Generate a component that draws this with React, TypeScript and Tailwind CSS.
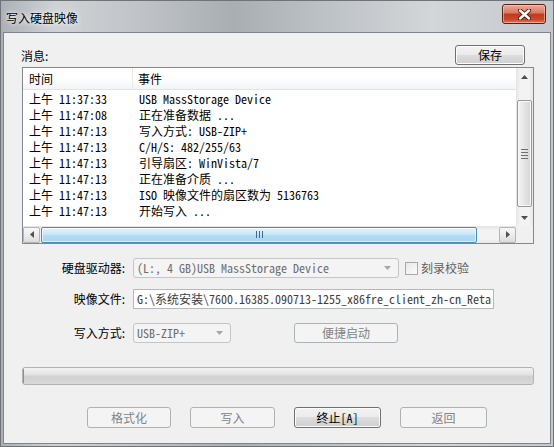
import React from "react";

const CJK_RUN = /([\u3000-\u303f\u4e00-\u9fff\uff00-\uffef]+)/;
const CJK_TEST = /[\u3000-\u303f\u4e00-\u9fff\uff00-\uffef]/;

// Renders mixed Chinese / Latin text in a half-width monospace CJK face.
function Mixed({ text }: { text: string }) {
  const parts = text.split(CJK_RUN).filter(Boolean);
  return (
    <>
      {parts.map((p, i) =>
        CJK_TEST.test(p) ? (
          <span key={i} className="font-['Noto_Sans_CJK_SC',sans-serif] text-[12px]">
            {p}
          </span>
        ) : (
          <span
            key={i}
            className="font-['Noto_Sans_Mono_CJK_SC','Liberation_Mono',monospace] text-[12px] whitespace-pre"
          >
            {p}
          </span>
        )
      )}
    </>
  );
}

const LOG: [string, string][] = [
  ["11:37:33", "USB MassStorage Device"],
  ["11:47:08", "正在准备数据 ..."],
  ["11:47:13", "写入方式: USB-ZIP+"],
  ["11:47:13", "C/H/S: 482/255/63"],
  ["11:47:13", "引导扇区: WinVista/7"],
  ["11:47:13", "正在准备介质 ..."],
  ["11:47:13", "ISO 映像文件的扇区数为 5136763"],
  ["11:47:13", "开始写入 ..."],
];

function Tri({ dir, color = "#505050" }: { dir: "up" | "down" | "left" | "right"; color?: string }) {
  if (dir === "up")
    return (
      <svg width="7" height="4" viewBox="0 0 7 4">
        <path d="M0 4 L3.5 0 L7 4Z" fill={color} />
      </svg>
    );
  if (dir === "down")
    return (
      <svg width="7" height="4" viewBox="0 0 7 4">
        <path d="M0 0 L3.5 4 L7 0Z" fill={color} />
      </svg>
    );
  if (dir === "left")
    return (
      <svg width="4" height="7" viewBox="0 0 4 7">
        <path d="M4 0 L0 3.5 L4 7Z" fill={color} />
      </svg>
    );
  return (
    <svg width="4" height="7" viewBox="0 0 4 7">
      <path d="M0 0 L4 3.5 L0 7Z" fill={color} />
    </svg>
  );
}

function Btn({ label, enabled = false, className = "" }: { label: React.ReactNode; enabled?: boolean; className?: string }) {
  return (
    <div
      className={
        "h-full flex items-center justify-center rounded-[3px] border leading-[16px] " +
        (enabled
          ? "border-[#707070] text-black bg-[linear-gradient(180deg,#f2f2f2_0%,#ebebeb_50%,#dddddd_50%,#cfcfcf_100%)] shadow-[inset_0_0_0_1px_#fcfcfc] "
          : "border-[#adb2b5] text-[#838383] bg-[#f4f4f4] ") +
        className
      }
    >
      {label}
    </div>
  );
}

function Combo({ text, className = "" }: { text: string; className?: string }) {
  return (
    <div
      className={
        "h-full flex items-center rounded-[3px] border border-[#c5c5c5] bg-[#f4f4f4] pl-[3px] pr-[7px] text-[#6d6d6d] " +
        className
      }
    >
      <div className="flex-1 min-w-0 overflow-hidden whitespace-nowrap leading-[16px]">
        <Mixed text={text} />
      </div>
      <Tri dir="down" color="#a6a6a6" />
    </div>
  );
}

export default function App() {
  return (
    <div className="w-[554px] h-[447px] flex flex-col overflow-hidden bg-[linear-gradient(90deg,#aab0b5_0%,#cfd3d6_10%,#c0c4c8_25%,#a9aeb3_42%,#bcc1c5_58%,#d3d6d9_78%,#c4c8cc_100%)] shadow-[inset_0_0_0_1px_#6f7479] font-['Noto_Sans_CJK_SC',sans-serif] text-[12px] text-black">
      {/* caption bar */}
      <div className="h-[32px] shrink-0 flex">
        <div className="pl-[6px] pt-[8px] leading-[20px] text-[12px] text-black [text-shadow:0_0_6px_rgba(255,255,255,0.95),0_0_3px_rgba(255,255,255,0.9)]">
          写入硬盘映像
        </div>
        <div className="ml-auto mt-[4px] mr-[8px] w-[44px] h-[20px] rounded-[3px] border border-[#5a1e13] bg-[linear-gradient(180deg,#e9ab9b_0%,#d9775f_45%,#c2391c_50%,#c9472b_80%,#de7a5a_100%)] shadow-[inset_0_0_0_1px_rgba(255,210,200,0.55)] flex items-center justify-center">
          <svg width="13" height="11" viewBox="0 0 13 11">
            <path d="M2 1.5 L11 9.5 M11 1.5 L2 9.5" stroke="#3c1810" strokeWidth="4.2" strokeLinecap="round" />
            <path d="M2 1.5 L11 9.5 M11 1.5 L2 9.5" stroke="#ffffff" strokeWidth="2.4" strokeLinecap="round" />
          </svg>
        </div>
      </div>

      {/* client area */}
      <div className="flex-1 mx-[3px] mb-[3px] border border-[#7f858a] bg-[#f0f0f0] flex flex-col pl-[18px] pr-[16px]">
        <div className="mt-[12px] h-[20px] flex items-end">
          <span className="leading-[16px] mb-[1px] -ml-[1px]">消息:</span>
          <Btn label="保存" enabled className="ml-auto mr-[9px] w-[70px]" />
        </div>

        {/* message list */}
        <div className="mt-[2px] h-[177px] border border-[#828790] bg-white flex flex-col">
          <div className="flex flex-1 min-h-0">
            <div className="flex-1 min-w-0 overflow-hidden">
              <div className="h-[22px] flex items-center border-b border-[#e2e3e5] bg-[linear-gradient(180deg,#ffffff_0%,#ffffff_45%,#f3f4f6_100%)] leading-[16px]">
                <div className="w-[110px] h-full flex items-center pl-[6px] border-r border-[#e7e8ea]">时间</div>
                <div className="pl-[5px]">事件</div>
              </div>
              <div className="pt-[1px]">
                {LOG.map(([t, e], i) => (
                  <div key={i} className="h-[16px] flex items-center leading-[16px] whitespace-nowrap">
                    <div className="w-[110px] pl-[6px] flex items-center">
                      <span className="w-[24px] text-[12px]">上午</span>
                      <span className="ml-[6px]">
                        <Mixed text={t} />
                      </span>
                    </div>
                    <div className="pl-[6px]">
                      <Mixed text={e} />
                    </div>
                  </div>
                ))}
              </div>
            </div>

            {/* vertical scrollbar */}
            <div className="w-[17px] flex flex-col bg-[linear-gradient(90deg,#e4e4e4_0%,#f3f3f3_25%,#f3f3f3_75%,#e8e8e8_100%)]">
              <div className="h-[17px] flex items-center justify-center">
                <Tri dir="up" />
              </div>
              <div className="flex-1 flex flex-col items-center pt-[15px] pb-[2px]">
                <div className="w-[15px] flex-1 rounded-[2px] border border-[#979797] bg-[linear-gradient(90deg,#f5f5f5_0%,#e6e6e6_45%,#d4d4d4_100%)] shadow-[inset_0_0_0_1px_#fafafa] flex flex-col items-center justify-center gap-[2px]">
                  <div className="w-[7px] h-[1px] bg-[#6f6f6f]" />
                  <div className="w-[7px] h-[1px] bg-[#6f6f6f]" />
                  <div className="w-[7px] h-[1px] bg-[#6f6f6f]" />
                  <div className="w-[7px] h-[1px] bg-[#6f6f6f]" />
                </div>
              </div>
              <div className="h-[17px] flex items-center justify-center">
                <Tri dir="down" />
              </div>
            </div>
          </div>

          {/* horizontal scrollbar */}
          <div className="h-[17px] flex">
            <div className="flex-1 flex items-center bg-[linear-gradient(180deg,#e4e4e4_0%,#f3f3f3_25%,#f3f3f3_75%,#e8e8e8_100%)]">
              <div className="w-[17px] h-[16px] rounded-[2px] border border-[#b5b5b5] bg-[linear-gradient(180deg,#f7f7f7_0%,#ececec_50%,#dcdcdc_100%)] flex items-center justify-center">
                <Tri dir="left" />
              </div>
              <div className="ml-[1px] w-[436px] h-[16px] rounded-[2px] border border-[#4f8ab8] bg-[linear-gradient(180deg,#e6f4fc_0%,#c9e7f8_45%,#b2dcf4_55%,#a7d6f1_100%)] shadow-[inset_0_0_0_1px_rgba(255,255,255,0.6)] flex items-center justify-center gap-[2px]">
                <div className="w-[1px] h-[7px] bg-[#3b6a8f]" />
                <div className="w-[1px] h-[7px] bg-[#3b6a8f]" />
                <div className="w-[1px] h-[7px] bg-[#3b6a8f]" />
              </div>
              <div className="ml-auto w-[17px] h-[16px] rounded-[2px] border border-[#b5b5b5] bg-[linear-gradient(180deg,#f7f7f7_0%,#ececec_50%,#dcdcdc_100%)] flex items-center justify-center">
                <Tri dir="right" />
              </div>
            </div>
            <div className="w-[17px] bg-[#f0f0f0]" />
          </div>
        </div>

        {/* drive */}
        <div className="mt-[14px] h-[20px] flex items-center">
          <div className="w-[103px] text-right leading-[16px]">硬盘驱动器:</div>
          <Combo text="(L:, 4 GB)USB MassStorage Device" className="ml-[8px] w-[266px]" />
          <div className="ml-[6px] w-[13px] h-[13px] border border-[#a9a9a9] bg-[linear-gradient(135deg,#e8e8e8,#fbfbfb)]" />
          <div className="ml-[3px] leading-[16px] text-[#5f5f5f]">刻录校验</div>
        </div>

        {/* image file */}
        <div className="mt-[11px] h-[20px] flex items-center">
          <div className="w-[103px] text-right leading-[16px]">映像文件:</div>
          <div className="ml-[8px] w-[361px] h-full border border-[#b5b8bd] bg-white pl-[3px] flex items-center whitespace-nowrap overflow-hidden text-[#3c3c3c] leading-[16px]">
            <Mixed text="G:\系统安装\7600.16385.090713-1255_x86fre_client_zh-cn_Reta" />
          </div>
        </div>

        {/* write mode */}
        <div className="mt-[14px] h-[20px] flex items-center">
          <div className="w-[103px] text-right leading-[16px]">写入方式:</div>
          <Combo text="USB-ZIP+" className="ml-[8px] w-[98px]" />
          <Btn label="便捷启动" className="ml-[63px] w-[104px]" />
        </div>

        {/* progress */}
        <div className="mt-[24px] h-[18px] rounded-[3px] border border-[#b2b2b2] bg-[linear-gradient(180deg,#f3f3f3_0%,#e3e3e3_40%,#d0d0d0_55%,#d9d9d9_100%)] overflow-hidden flex">
          <div className="w-[1px] h-full bg-[#3fc63f]" />
        </div>

        {/* actions */}
        <div className="mt-[22px] h-[21px] flex gap-[19px] pl-[65px]">
          <Btn label="格式化" className="w-[84px]" />
          <Btn label="写入" className="w-[85px]" />
          <Btn label={<Mixed text="终止[A]" />} enabled className="w-[87px]" />
          <Btn label="返回" className="w-[87px]" />
        </div>
      </div>
    </div>
  );
}
